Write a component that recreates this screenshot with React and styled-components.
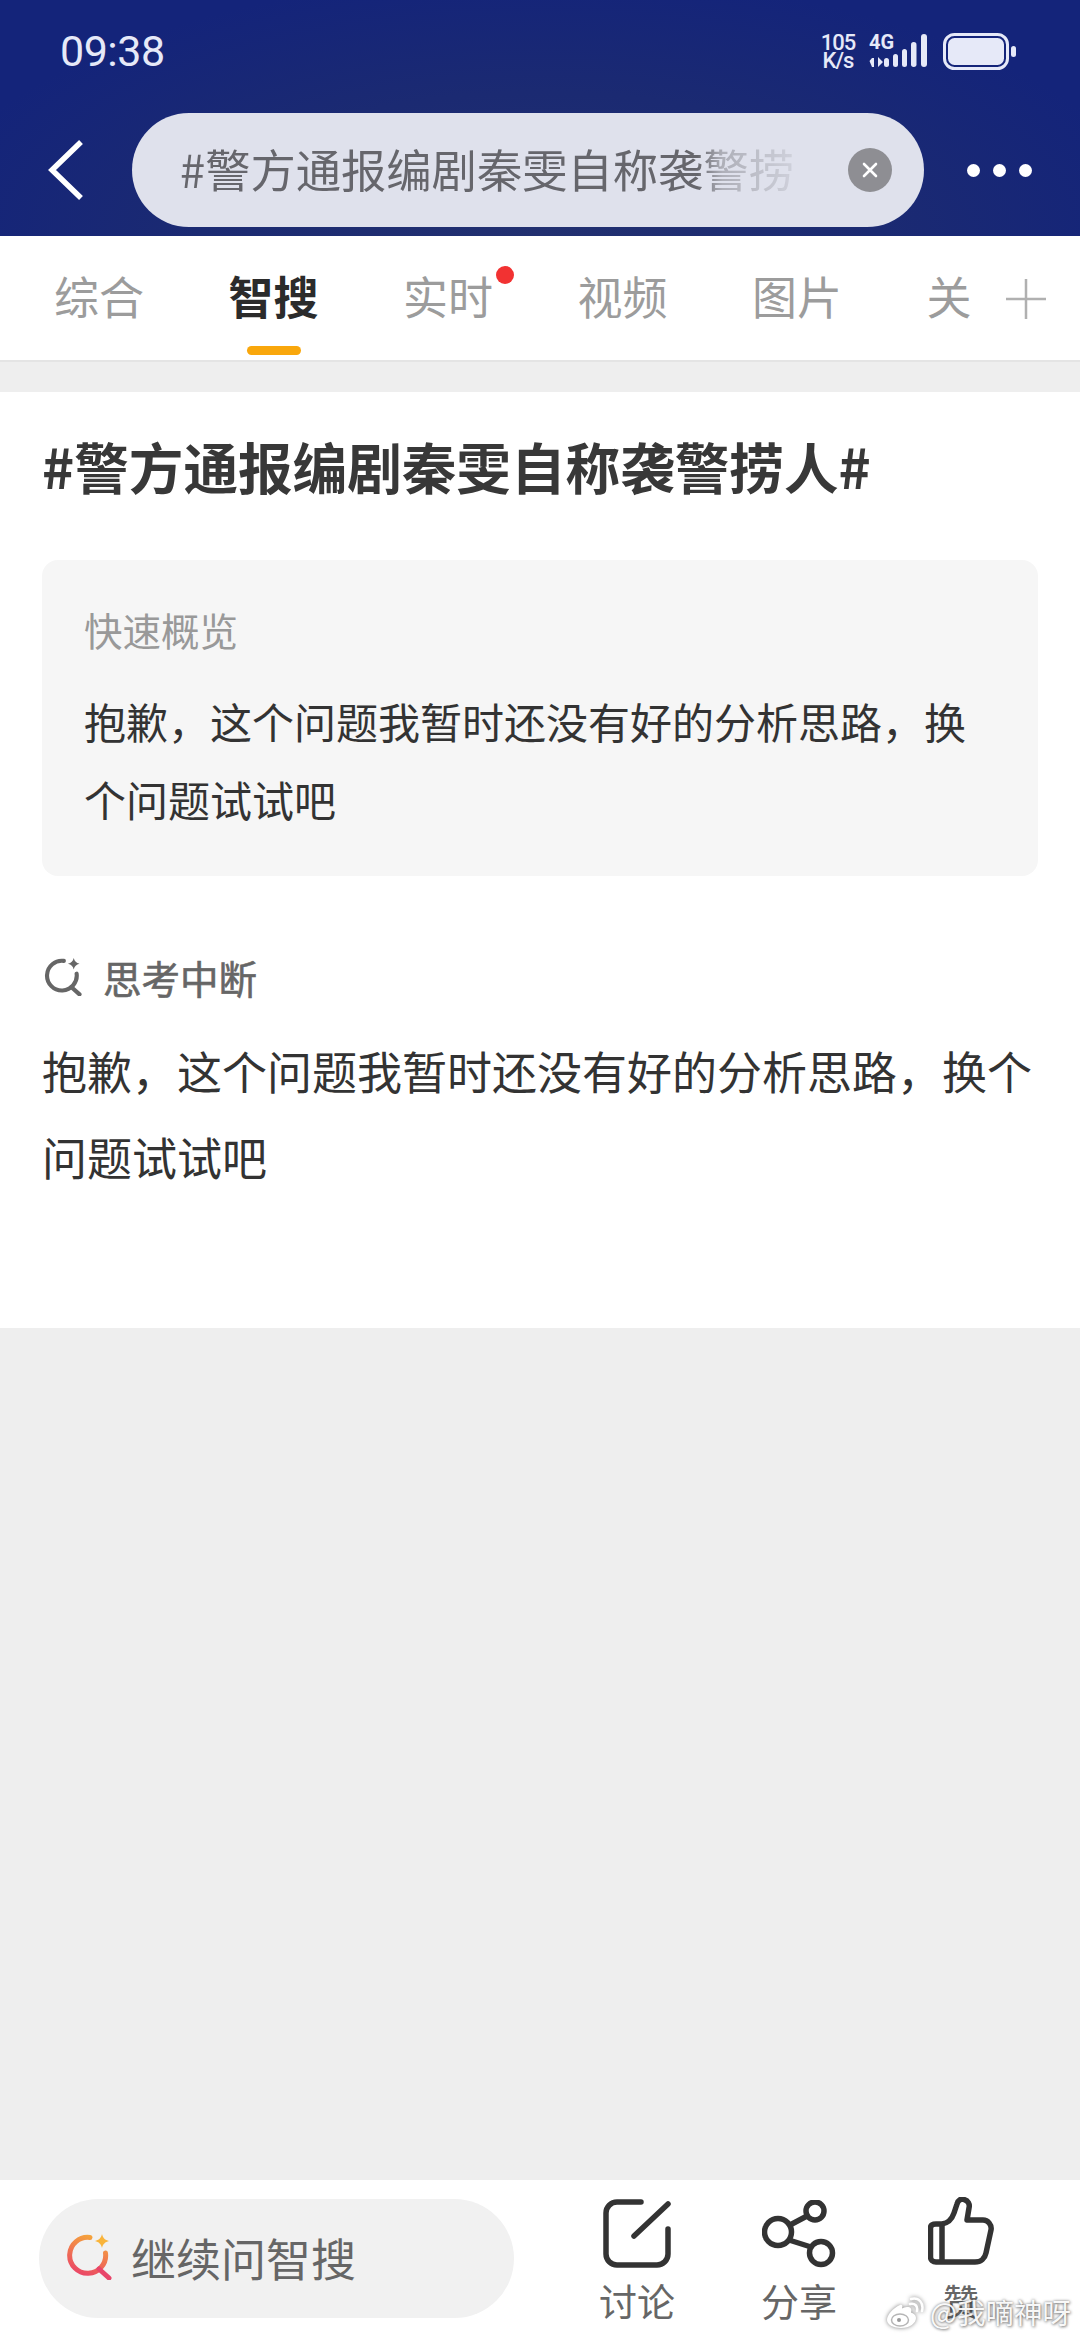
import React from "react";
import styled, { createGlobalStyle } from "styled-components";

const GlobalStyle = createGlobalStyle`
  html, body {
    margin: 0;
    padding: 0;
    background: #eeeeee;
  }
  * {
    box-sizing: border-box;
  }
`;

const CJK = `"Noto Sans CJK SC", "Noto Sans", sans-serif`;

const Page = styled.div`
  width: 1080px;
  height: 2340px;
  position: relative;
  display: flex;
  flex-direction: column;
  overflow: hidden;
  font-family: ${CJK};
  background: #eeeeee;
`;

const Header = styled.header`
  height: 236px;
  background: radial-gradient(ellipse 620px 260px at 540px 235px, #223070 0%, #1b2a72 55%, #14247a 100%);
`;

const StatusBar = styled.div`
  height: 113px;
  padding: 0 64px 10px 60px;
  display: flex;
  align-items: center;
  justify-content: space-between;
  color: #e6e9f8;
`;

const Clock = styled.span`
  font-family: Roboto, sans-serif;
  font-size: 43px;
  line-height: 1;
  letter-spacing: -0.5px;
`;

const StatusRight = styled.div`
  display: flex;
  align-items: center;
`;

const Speed = styled.div`
  width: 36px;
  margin-right: 13px;
  font-family: Roboto, sans-serif;
  font-size: 22px;
  font-weight: 500;
  line-height: 18px;
  letter-spacing: -1px;
  text-align: center;
`;

const NetworkBox = styled.div`
  width: 71px;
  margin-right: 3px;
  position: relative;
  height: 36px;
`;

const NetworkLabel = styled.span`
  position: absolute;
  left: 0;
  top: -2px;
  font-family: Roboto, sans-serif;
  font-size: 20px;
  font-weight: 700;
  line-height: 20px;
`;

const NetworkBars = styled.svg`
  position: absolute;
  left: 0;
  top: 0;
`;

const NavRow = styled.div`
  height: 123px;
  display: flex;
  align-items: flex-start;
  padding-left: 48px;
`;

const BackButton = styled.div`
  width: 40px;
  height: 114px;
  display: flex;
  align-items: center;
  margin-right: 44px;
`;

const SearchPill = styled.div`
  width: 792px;
  height: 114px;
  border-radius: 57px;
  background: #dfe1ec;
  padding: 0 32px 0 48px;
  display: flex;
  align-items: center;
  justify-content: space-between;
`;

const SearchText = styled.div`
  width: 616px;
  padding-bottom: 5px;
  white-space: nowrap;
  font-size: 45.3px;
  line-height: 60px;
  color: #66666c;
  -webkit-mask-image: linear-gradient(90deg, #000 0%, #000 84%, rgba(0, 0, 0, 0.4) 88%, rgba(0, 0, 0, 0.12) 100%);
  mask-image: linear-gradient(90deg, #000 0%, #000 84%, rgba(0, 0, 0, 0.4) 88%, rgba(0, 0, 0, 0.12) 100%);
`;

const ClearButton = styled.div`
  width: 44px;
  height: 44px;
  border-radius: 50%;
  background: #8e8e93;
  display: flex;
  align-items: center;
  justify-content: center;
`;

const MoreDots = styled.div`
  height: 114px;
  margin-left: 43px;
  display: flex;
  align-items: center;
  gap: 13px;
`;

const Dot = styled.i`
  width: 13px;
  height: 13px;
  border-radius: 50%;
  background: #ffffff;
`;

const TabBar = styled.nav`
  height: 126px;
  background: #ffffff;
  border-bottom: 2px solid #e4e4e4;
  padding: 0 34px 0 54px;
  display: flex;
`;

const Tab = styled.div`
  width: ${(props) => props.$width || 90}px;
  margin-right: ${(props) => (props.$last ? 0 : 84.5)}px;
  position: relative;
  display: flex;
  flex-direction: column;
  align-items: center;
  padding-top: 30px;
  font-size: 45px;
  line-height: 60px;
  white-space: nowrap;
  font-weight: ${(props) => (props.$active ? 700 : 400)};
  color: ${(props) => (props.$active ? "#2b2b2b" : "#9c9c9c")};
`;

const Indicator = styled.span`
  width: 54px;
  height: 9px;
  margin-top: 20px;
  border-radius: 5px;
  background: #f9a70c;
`;

const RedDot = styled.span`
  position: absolute;
  top: 30px;
  right: -21px;
  width: 18px;
  height: 18px;
  border-radius: 50%;
  background: #f23232;
`;

const PlusButton = styled.div`
  margin-left: auto;
  padding-top: 43px;
`;

const Card = styled.main`
  margin-top: 30px;
  padding: 39px 42px 128px;
  background: #ffffff;
`;

const Title = styled.h1`
  margin: 0;
  font-size: 54.6px;
  line-height: 70px;
  font-weight: 700;
  color: #383838;
  white-space: nowrap;
`;

const SummaryBox = styled.section`
  margin-top: 59px;
  padding: 44px 40px 38px 42px;
  border-radius: 16px;
  background: #f6f6f6;
`;

const SummaryLabel = styled.div`
  font-size: 38.5px;
  line-height: 50px;
  color: #999999;
`;

const SummaryText = styled.p`
  margin: 28px 0 0;
  font-size: 42px;
  line-height: 78px;
  color: #333333;
`;

const ThinkingRow = styled.div`
  margin-top: 76px;
  display: flex;
  align-items: center;
  gap: 21px;
  padding-left: 2px;
  height: 50px;
  font-size: 38.5px;
  -webkit-text-stroke: 0.6px #666666;
  color: #666666;
`;

const Answer = styled.p`
  margin: 26px 0 0;
  font-size: 45px;
  line-height: 86px;
  color: #333333;
`;

const Filler = styled.div`
  flex: 1;
  background: #eeeeee;
`;

const BottomBar = styled.footer`
  height: 160px;
  background: #ffffff;
  display: flex;
  padding: 19px 0 0 39px;
`;

const AskBox = styled.div`
  width: 475px;
  height: 119px;
  border-radius: 60px;
  background: #f1f1f1;
  display: flex;
  align-items: center;
  padding: 0 0 3px 27px;
  gap: 19px;
  font-size: 45px;
  color: #666666;
`;

const Actions = styled.div`
  margin-left: 42px;
  display: flex;
  margin-top: -19px;
`;

const Action = styled.div`
  width: 162px;
  display: flex;
  flex-direction: column;
  align-items: center;
  font-size: ${(props) => props.$size || 38}px;
  line-height: 48px;
  color: #666666;
`;

const ActionIcon = styled.div`
  height: 96px;
  padding-top: ${(props) => props.$top}px;
`;

const Watermark = styled.div`
  position: absolute;
  left: 886px;
  top: 2294px;
  display: flex;
  align-items: center;
  gap: 6px;
  font-size: 28.5px;
  line-height: 36px;
  white-space: nowrap;
  color: rgba(255, 255, 255, 0.95);
  text-shadow: 0 0 3px rgba(0, 0, 0, 0.5), 1px 1px 3px rgba(0, 0, 0, 0.35);
`;

const WatermarkLogo = styled.svg`
  filter: drop-shadow(0 0 2px rgba(0, 0, 0, 0.5));
`;

// ring with a gap at the top right, a handle and a small star
const SparkSearch = ({ id, size, ring, handle, star }) => (
  <svg width={size} height={size} viewBox="0 0 46 46" fill="none">
    <defs>
      <linearGradient id={id} x1="30" y1="2" x2="14" y2="42" gradientUnits="userSpaceOnUse">
        <stop offset="0" stopColor={ring[0]} />
        <stop offset="1" stopColor={ring[1]} />
      </linearGradient>
    </defs>
    <path d="M24 3.5A18 18 0 1 0 39.500 19" stroke={`url(#${id})`} strokeWidth="5" strokeLinecap="round" />
    <path d="M33 35L43 44" stroke={handle} strokeWidth="5" strokeLinecap="round" />
    <path d="M36 0C37 4 39 6 43 7C39 8 37 10 36 14C35 10 33 8 29 7C33 6 35 4 36 0Z" fill={star} />
  </svg>
);

const App = () => (
  <Page>
    <GlobalStyle />
    <Header>
      <StatusBar>
        <Clock>09:38</Clock>
        <StatusRight>
          <Speed>
            105
            <br />
            K/s
          </Speed>
          <NetworkBox>
            <NetworkLabel>4G</NetworkLabel>
            <NetworkBars width="71" height="36" viewBox="0 0 71 36" fill="#e6e9f8">
              <path d="M3 33V24L0.5 27M3 24H5V33H3ZM9 23V33L14 28Z" />
              <rect x="15" y="24" width="5" height="9" rx="2.5" />
              <rect x="24" y="20" width="5" height="13" rx="2.5" />
              <rect x="33" y="15" width="5" height="18" rx="2.5" />
              <rect x="42" y="8" width="5.5" height="25" rx="2.7" />
              <rect x="52" y="0" width="6" height="33" rx="3" />
            </NetworkBars>
          </NetworkBox>
          <svg width="73" height="37" viewBox="0 0 73 37" fill="none">
            <rect x="1.5" y="1.5" width="63" height="34" rx="10" stroke="#e6e9f8" strokeWidth="3" />
            <rect x="5" y="5" width="56" height="27" rx="6.5" fill="#e6e9f8" />
            <rect x="68" y="13" width="5" height="11" rx="2.5" fill="#e6e9f8" />
          </svg>
        </StatusRight>
      </StatusBar>
      <NavRow>
        <BackButton>
          <svg width="36" height="60" viewBox="0 0 36 60" fill="none">
            <path d="M33 2L4 30L33 58" stroke="#ffffff" strokeWidth="5.5" />
          </svg>
        </BackButton>
        <SearchPill>
          <SearchText>#警方通报编剧秦雯自称袭警捞</SearchText>
          <ClearButton>
            <svg width="18" height="18" viewBox="0 0 18 18" fill="none">
              <path d="M3 3L15 15M15 3L3 15" stroke="#ffffff" strokeWidth="2.6" strokeLinecap="round" />
            </svg>
          </ClearButton>
        </SearchPill>
        <MoreDots>
          <Dot />
          <Dot />
          <Dot />
        </MoreDots>
      </NavRow>
    </Header>

    <TabBar>
      <Tab>综合</Tab>
      <Tab $active>
        智搜
        <Indicator />
      </Tab>
      <Tab>
        实时
        <RedDot />
      </Tab>
      <Tab>视频</Tab>
      <Tab>图片</Tab>
      <Tab $width={45} $last>
        关
      </Tab>
      <PlusButton>
        <svg width="40" height="40" viewBox="0 0 40 40" fill="none">
          <path d="M0 20H40M20 0V40" stroke="#b0b0b0" strokeWidth="2.5" />
        </svg>
      </PlusButton>
    </TabBar>

    <Card>
      <Title>#警方通报编剧秦雯自称袭警捞人#</Title>
      <SummaryBox>
        <SummaryLabel>快速概览</SummaryLabel>
        <SummaryText>抱歉，这个问题我暂时还没有好的分析思路，换个问题试试吧</SummaryText>
      </SummaryBox>
      <ThinkingRow>
        <SparkSearch id="thinkGrad" size={38} ring={["#666666", "#666666"]} handle="#666666" star="#666666" />
        思考中断
      </ThinkingRow>
      <Answer>抱歉，这个问题我暂时还没有好的分析思路，换个问题试试吧</Answer>
    </Card>

    <Filler />

    <BottomBar>
      <AskBox>
        <SparkSearch id="askGrad" size={46} ring={["#f5a83a", "#ea4368"]} handle="#e8456a" star="#f9b43a" />
        继续问智搜
      </AskBox>
      <Actions>
        <Action>
          <ActionIcon $top={19}>
            <svg width="68" height="69" viewBox="0 0 68 69" fill="none" stroke="#333333" strokeWidth="5.5" strokeLinecap="round">
              <path d="M38 3H14A11 11 0 0 0 3 14V55A11 11 0 0 0 14 66H54A11 11 0 0 0 65 55V30" />
              <path d="M31 37L65 5" />
            </svg>
          </ActionIcon>
          讨论
        </Action>
        <Action>
          <ActionIcon $top={20}>
            <svg width="74" height="68" viewBox="0 0 74 68" fill="none" stroke="#333333" strokeWidth="5.5">
              <circle cx="16" cy="32" r="13.5" />
              <circle cx="53" cy="11" r="9" />
              <circle cx="59" cy="53" r="11.5" />
              <path d="M28 25L45 16M27 40L49 47" />
            </svg>
          </ActionIcon>
          分享
        </Action>
        <Action $size={36}>
          <ActionIcon $top={17}>
            <svg width="66" height="68" viewBox="0 0 66 68" fill="none" stroke="#333333" strokeWidth="5.5" strokeLinejoin="round">
              <path d="M14 27C20 26 24 22 26 16L29 7C30 3 33 1.5 36 2.5C40 3.5 42 7 41 11L39 23H55C60 23 64 28 63 33L58 56C57 61 53 65 47 65H8C5 65 2.5 63 2.5 60V31C2.5 28 5 27 8 27H14V65" />
            </svg>
          </ActionIcon>
          赞
        </Action>
      </Actions>
    </BottomBar>

    <Watermark>
      <WatermarkLogo width="38" height="33" viewBox="0 0 38 33" fill="none">
        <path d="M14 9C7 12 1 19 1 24C1 29 8 32 15 32C24 32 30 27 30 22C30 18 26 17 25 16.500C26 13 25 11 21 11C19 11 17 12 16 12.500C17 10 16 8 14 9Z" fill="#ffffff" />
        <ellipse cx="14" cy="24" rx="8.500" ry="6" stroke="#b5b5b5" strokeWidth="1.500" />
        <circle cx="13" cy="24" r="2" fill="#999999" />
        <path d="M24 8C29 7 32 10 31 15M25 3C33 1 38 7 36 15" stroke="#ffffff" strokeWidth="2.500" strokeLinecap="round" />
      </WatermarkLogo>
      @我嘀神呀
    </Watermark>
  </Page>
);

export default App;
